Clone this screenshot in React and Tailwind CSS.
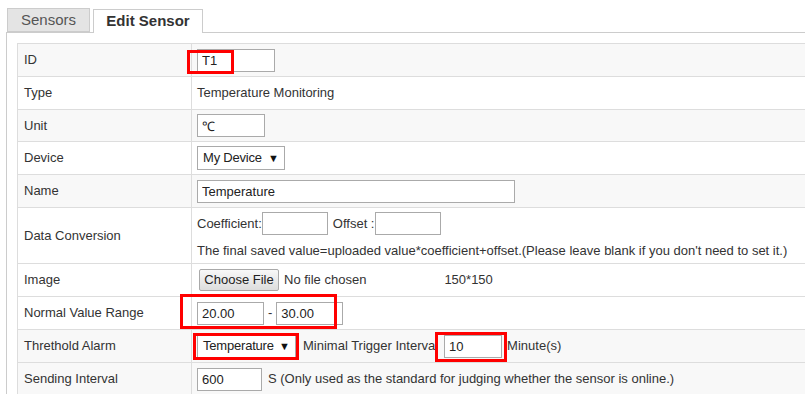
import React from 'react';

const FONT = { fontFamily: '"Liberation Sans", Arial, sans-serif' };

function Box({ value, w, className = '' }) {
  return (
    <input
      readOnly
      value={value}
      className={'h-[23px] border border-[#aaaaaa] bg-white px-[4px] text-[13px] text-[#222] outline-none ' + w + ' ' + className}
    />
  );
}

function FakeSelect({ label, w }) {
  return (
    <div className={'flex h-[24px] items-center justify-between border border-[#aaaaaa] bg-white pl-[5px] pr-[5px] text-[13px] text-[#222] ' + w}>
      <span className="tracking-[-0.2px]">{label}</span>
      <span className="text-[11px] text-[#111]">▼</span>
    </div>
  );
}

function Mark({ className }) {
  return <div className={'pointer-events-none absolute border-[3px] border-[#ff0000] ' + className} />;
}

function Row({ label, gray, h = 'h-[33px]', children }) {
  return (
    <tr className={(gray ? 'bg-[#f8f8f8] ' : 'bg-white ') + h}>
      <td className="w-[174px] border border-[#dddddd] pl-[6px] align-middle">{label}</td>
      <td className="border border-[#dddddd] pl-[5px] align-middle">{children}</td>
    </tr>
  );
}

export default function App() {
  return (
    <div className="h-[394px] w-[805px] overflow-hidden bg-white text-[13px] text-[#333]" style={FONT}>
      <div className="flex items-end gap-[3px] pl-[7px] pt-[8px]">
        <div className="flex h-[24px] w-[83px] items-center justify-center border border-[#cccccc] bg-[#e4e4e4] text-[15px] text-[#555]">
          Sensors
        </div>
        <div className="relative z-10 -mb-px flex h-[24px] w-[110px] items-center justify-center border border-b-0 border-[#cccccc] bg-white text-[15px] font-bold text-[#333]">
          Edit Sensor
        </div>
      </div>

      <div className="ml-[6px] border-l border-t border-[#cccccc] pl-[10px] pt-[10px]">
        <table className="w-[800px] border-collapse">
          <tbody>
            <Row label="ID" gray>
              <div className="relative w-fit">
                <Box value="T1" w="w-[78px]" />
                <Mark className="left-[-10px] top-[1px] h-[24px] w-[47px]" />
              </div>
            </Row>
            <Row label="Type">Temperature Monitoring</Row>
            <Row label="Unit" gray h="h-[32px]">
              <Box value="℃" w="w-[68px]" />
            </Row>
            <Row label="Device">
              <FakeSelect label="My Device" w="w-[88px]" />
            </Row>
            <Row label="Name" gray>
              <Box value="Temperature" w="w-[318px]" />
            </Row>
            <Row label="Data Conversion" h="h-[56px]">
              <div className="flex items-center pt-[2px]">
                <span>Coefficient:</span>
                <Box value="" w="w-[66px]" />
                <span className="ml-[5px] mr-[1px]">Offset :</span>
                <Box value="" w="w-[66px]" />
              </div>
              <div className="mt-[6px]">
                The final saved value=uploaded value*coefficient+offset.(Please leave blank if you don't need to set it.)
              </div>
            </Row>
            <Row label="Image">
              <div className="flex items-center">
                <button className="ml-[2px] h-[22px] w-[80px] rounded-[2px] border border-[#a9a9a9] bg-gradient-to-b from-[#f8f8f8] to-[#dddddd] text-[13px] text-[#222]">
                  Choose File
                </button>
                <span className="ml-[5px]">No file chosen</span>
                <span className="ml-[78px]">150*150</span>
              </div>
            </Row>
            <Row label="Normal Value Range">
              <div className="relative flex w-fit items-center">
                <Box value="20.00" w="w-[67px]" />
                <span className="mx-[4px]">-</span>
                <Box value="30.00" w="w-[67px]" />
                <Mark className="left-[-17px] top-[-8px] h-[35px] w-[157px]" />
              </div>
            </Row>
            <Row label="Threthold Alarm" gray>
              <div className="flex items-center">
                <div className="relative">
                  <FakeSelect label="Temperature" w="w-[99px]" />
                  <Mark className="left-[-4px] top-[-1px] h-[27px] w-[106px]" />
                </div>
                <span className="ml-[7px]">Minimal Trigger Interval</span>
                <div className="relative ml-[6px]">
                  <Box value="10" w="w-[58px]" />
                  <Mark className="left-[-9px] top-[-3px] h-[30px] w-[72px]" />
                </div>
                <span className="ml-[5px]">Minute(s)</span>
              </div>
            </Row>
            <Row label="Sending Interval" gray>
              <div className="flex items-center">
                <Box value="600" w="w-[65px]" />
                <span className="ml-[6px]">S (Only used as the standard for judging whether the sensor is online.)</span>
              </div>
            </Row>
          </tbody>
        </table>
      </div>
    </div>
  );
}
